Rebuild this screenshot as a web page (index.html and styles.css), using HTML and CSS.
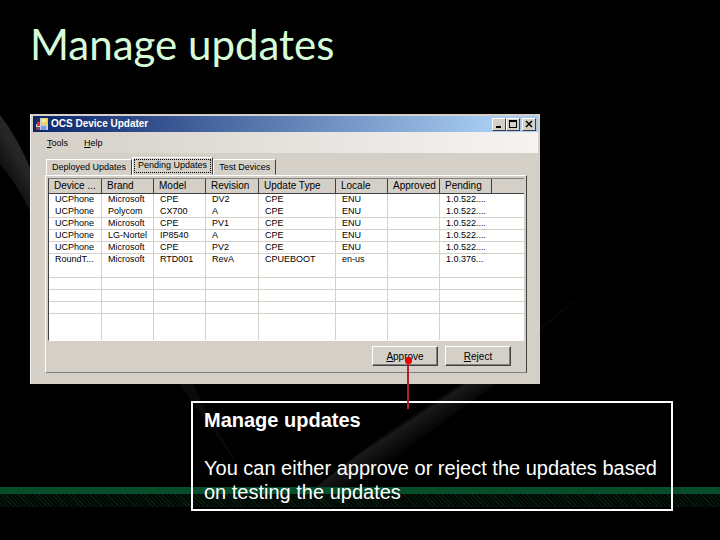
FILE: index.html
```html
<!DOCTYPE html>
<html lang="en">
<head>
<meta charset="UTF-8">
<meta name="viewport" content="width=device-width, initial-scale=1.0">
<title>Manage updates</title>
<link rel="stylesheet" href="styles.css">
</head>
<body>

<!-- slide backdrop -->
<svg class="backdrop" viewBox="0 0 720 540" preserveAspectRatio="none" aria-hidden="true">
  <defs>
    <linearGradient id="beam" gradientUnits="userSpaceOnUse" x1="396" y1="426" x2="412" y2="450">
      <stop offset="0" stop-color="#fff" stop-opacity="0"/>
      <stop offset="0.15" stop-color="#fff" stop-opacity="0.1"/>
      <stop offset="1" stop-color="#fff" stop-opacity="0"/>
    </linearGradient>
    <linearGradient id="edge" gradientUnits="userSpaceOnUse" x1="20" y1="160" x2="-8" y2="176">
      <stop offset="0" stop-color="#fff" stop-opacity="0.15"/>
      <stop offset="1" stop-color="#fff" stop-opacity="0"/>
    </linearGradient>
  </defs>
  <path d="M316 487 Q400 420 470 374 L510 374 Q430 430 360 487Z" fill="url(#beam)"/>
  <path d="M0 115 Q18 138 32 172 L32 215 Q15 180 0 165Z" fill="url(#edge)"/>
  <path d="M172 374 L188 374 Q215 430 245 475Z" fill="#fff" fill-opacity="0.04"/>
  <path d="M540 326 L600 280 L540 332Z" fill="#fff" fill-opacity="0.02"/>
</svg>
<div class="stripe"></div>

<main class="slide">
  <h1>Manage updates</h1>

  <section class="window">
    <div class="titlebar">
      <svg class="app-icon" width="12" height="12" viewBox="0 0 12 12" aria-hidden="true">
        <rect width="12" height="12" fill="#c9cfdd"/>
        <rect width="4" height="6" fill="#26304f"/>
        <rect x="1" y="4" width="3" height="4" fill="#d03030"/>
        <rect y="9" width="4" height="3" fill="#8a4050"/>
        <rect x="5" width="7" height="7" fill="#f4cf5c"/>
        <rect x="6" y="1" width="4" height="3" fill="#fbe9a4"/>
        <rect x="5" y="8" width="5" height="4" fill="#6f9be8"/>
      </svg>
      <span class="caption">OCS Device Updater</span>
      <div class="controls">
        <button type="button" aria-label="Minimize"><svg width="8" height="8" viewBox="0 0 8 8"><path d="M1 6h5v2H1z"/></svg></button>
        <button type="button" aria-label="Maximize"><svg width="8" height="8" viewBox="0 0 8 8"><path fill-rule="evenodd" d="M0 0h8v8H0zM1 2v5h6V2z"/></svg></button>
        <button type="button" class="close" aria-label="Close"><svg width="8" height="8" viewBox="0 0 8 8"><path d="M1 1l6 6M7 1L1 7" stroke="#000" stroke-width="1.5"/></svg></button>
      </div>
    </div>

    <nav class="menu">
      <button type="button"><u>T</u>ools</button>
      <button type="button"><u>H</u>elp</button>
    </nav>

    <div class="tabs" role="tablist">
      <button type="button" role="tab" aria-selected="false">Deployed Updates</button>
      <button type="button" role="tab" aria-selected="true" class="active">Pending Updates</button>
      <button type="button" role="tab" aria-selected="false">Test Devices</button>
    </div>

    <div class="panel">
      <div class="list">
        <table>
          <colgroup>
            <col class="col-mid"><col class="col"><col class="col"><col class="col-mid">
            <col class="col-wide"><col class="col"><col class="col"><col class="col"><col>
          </colgroup>
          <thead>
            <tr><th>Device ...</th><th>Brand</th><th>Model</th><th>Revision</th><th>Update Type</th><th>Locale</th><th>Approved</th><th>Pending</th><th></th></tr>
          </thead>
          <tbody>
            <tr><td>UCPhone</td><td>Microsoft</td><td>CPE</td><td>DV2</td><td>CPE</td><td>ENU</td><td></td><td>1.0.522....</td><td></td></tr>
            <tr><td>UCPhone</td><td>Polycom</td><td>CX700</td><td>A</td><td>CPE</td><td>ENU</td><td></td><td>1.0.522....</td><td></td></tr>
            <tr><td>UCPhone</td><td>Microsoft</td><td>CPE</td><td>PV1</td><td>CPE</td><td>ENU</td><td></td><td>1.0.522....</td><td></td></tr>
            <tr><td>UCPhone</td><td>LG-Nortel</td><td>IP8540</td><td>A</td><td>CPE</td><td>ENU</td><td></td><td>1.0.522....</td><td></td></tr>
            <tr><td>UCPhone</td><td>Microsoft</td><td>CPE</td><td>PV2</td><td>CPE</td><td>ENU</td><td></td><td>1.0.522....</td><td></td></tr>
            <tr><td>RoundT...</td><td>Microsoft</td><td>RTD001</td><td>RevA</td><td>CPUEBOOT</td><td>en-us</td><td></td><td>1.0.376...</td><td></td></tr>
            <tr><td></td><td></td><td></td><td></td><td></td><td></td><td></td><td></td><td></td></tr>
            <tr><td></td><td></td><td></td><td></td><td></td><td></td><td></td><td></td><td></td></tr>
            <tr><td></td><td></td><td></td><td></td><td></td><td></td><td></td><td></td><td></td></tr>
            <tr><td></td><td></td><td></td><td></td><td></td><td></td><td></td><td></td><td></td></tr>
            <tr><td></td><td></td><td></td><td></td><td></td><td></td><td></td><td></td><td></td></tr>
            <tr><td></td><td></td><td></td><td></td><td></td><td></td><td></td><td></td><td></td></tr>
          </tbody>
        </table>
      </div>
      <div class="actions">
        <div class="target">
          <button type="button"><u>A</u>pprove</button>
          <span class="pointer"></span>
        </div>
        <button type="button"><u>R</u>eject</button>
      </div>
    </div>
  </section>

  <aside class="callout">
    <h2>Manage updates</h2>
    <p>You can either approve or reject the updates based on testing the updates</p>
  </aside>
</main>

</body>
</html>
```
FILE: styles.css
```css
* {
  box-sizing: border-box;
}
body {
  margin: 0;
  min-height: 100vh;
  position: relative;
  background-color: #000;
  font-family: "Liberation Sans", Arial, sans-serif;
}

/* backdrop */
.backdrop {
  position: absolute;
  top: 0;
  left: 0;
  width: 100%;
  height: 100%;
}
.stripe {
  position: absolute;
  left: 0;
  right: 0;
  bottom: 33px;
  height: 20px;
  border-top: 7px solid #064d29;
  background: repeating-linear-gradient(45deg, #04200f 0 1px, #020703 1px 3px);
}

.slide {
  position: relative;
  padding: 16px 30px 29px;
}
h1 {
  margin: 0 0 42px;
  font-family: Lato, sans-serif;
  font-size: 42px;
  font-weight: 400;
  line-height: 56px;
  color: #d5fbd9;
}

/* application window */
.window {
  max-width: 510px;
  padding: 2px;
  background-color: #d4d0c8;
  border-left: 1px solid #f4f3ef;
  font-size: 10px;
  color: #000;
}
.window button {
  font: inherit;
  color: inherit;
  padding: 0;
}
.titlebar {
  display: flex;
  align-items: center;
  gap: 3px;
  height: 16px;
  padding: 0 2px 0 3px;
  background: linear-gradient(to right, #0a246a, #a6caf0 90%);
}
.caption {
  flex: 1;
  color: #fff;
  font-weight: bold;
  line-height: 16px;
}
.controls {
  display: flex;
}
.controls button {
  display: flex;
  align-items: center;
  justify-content: center;
  width: 14px;
  height: 13px;
  background-color: #d4d0c8;
  border: 1px solid;
  border-color: #fff #404040 #404040 #fff;
}
.controls .close {
  margin-left: 2px;
}
.menu {
  display: flex;
  gap: 16px;
  height: 21px;
  padding: 0 14px;
  font-size: 9px;
  background: linear-gradient(to right, #d4d0c8, #f5f4f2);
}
.menu button {
  border: none;
  background: none;
}
.tabs {
  display: flex;
  align-items: flex-end;
  height: 22px;
  padding: 0 13px;
  font-size: 9px;
}
.tabs button {
  height: 16px;
  padding: 0 5px;
  line-height: 14px;
  white-space: nowrap;
  background-color: #d4d0c8;
  border: 1px solid;
  border-color: #fff #404040 transparent #fff;
}
.tabs .active {
  height: 18px;
  padding: 0 5px 2px;
  outline: 1px dotted #000;
  outline-offset: -3px;
}
.panel {
  margin: 0 11px 9px 12px;
  padding: 2px;
  border: 1px solid;
  border-color: #fff #404040 #808080 #fff;
}

/* device list */
.list {
  background-color: #fff;
  border-top: 1px solid #808080;
  border-left: 1px solid #404040;
  border-bottom: 1px solid #fff;
}
table {
  width: 100%;
  table-layout: fixed;
  border-collapse: separate;
  border-spacing: 0;
}
.col {
  width: 52px;
}
.col-mid {
  width: 53px;
}
.col-wide {
  width: 77px;
}
th, td {
  padding: 0 0 0 6px;
  text-align: left;
  font-weight: normal;
  white-space: nowrap;
}
th {
  height: 15px;
  padding-left: 5px;
  line-height: 14px;
  background-color: #d4d0c8;
  border-right: 1px solid #404040;
  border-bottom: 1px solid #404040;
}
th:last-child {
  border-right: none;
}
td {
  height: 12px;
  font-size: 9px;
  line-height: 11px;
  border-right: 1px solid #d4d0c8;
  border-bottom: 1px solid #d4d0c8;
}
td:nth-last-child(-n+2) {
  border-right: none;
}
tr:nth-child(5n+1) td {
  border-bottom-color: #fff;
}
tr:last-child td {
  height: 14px;
  border-bottom: none;
}

.actions {
  display: flex;
  justify-content: flex-end;
  gap: 7px;
  padding: 5px 13px 4px;
}
.actions button {
  width: 66px;
  height: 20px;
  background-color: #d4d0c8;
  border: 1px solid;
  border-color: #fff #404040 #404040 #fff;
  box-shadow: inset -1px -1px #808080;
}
.target {
  position: relative;
}
/* line from the callout up to the button */
.pointer {
  position: absolute;
  z-index: 1;
  top: 14px;
  left: 35px;
  width: 2px;
  height: 49px;
  background-color: #b41f24;
}
.pointer::before {
  content: "";
  position: absolute;
  top: -3px;
  left: -2px;
  width: 7px;
  height: 7px;
  border-radius: 3px;
  background-color: #e80000;
}

.callout {
  max-width: 482px;
  margin: 17px 0 0 161px;
  padding: 5px 11px;
  border: 2px solid #fff;
  color: #fff;
  font-size: 20px;
  line-height: 24px;
}
.callout h2 {
  margin: 0 0 24px;
  font-size: 20px;
}
.callout p {
  margin: 0;
}
```
